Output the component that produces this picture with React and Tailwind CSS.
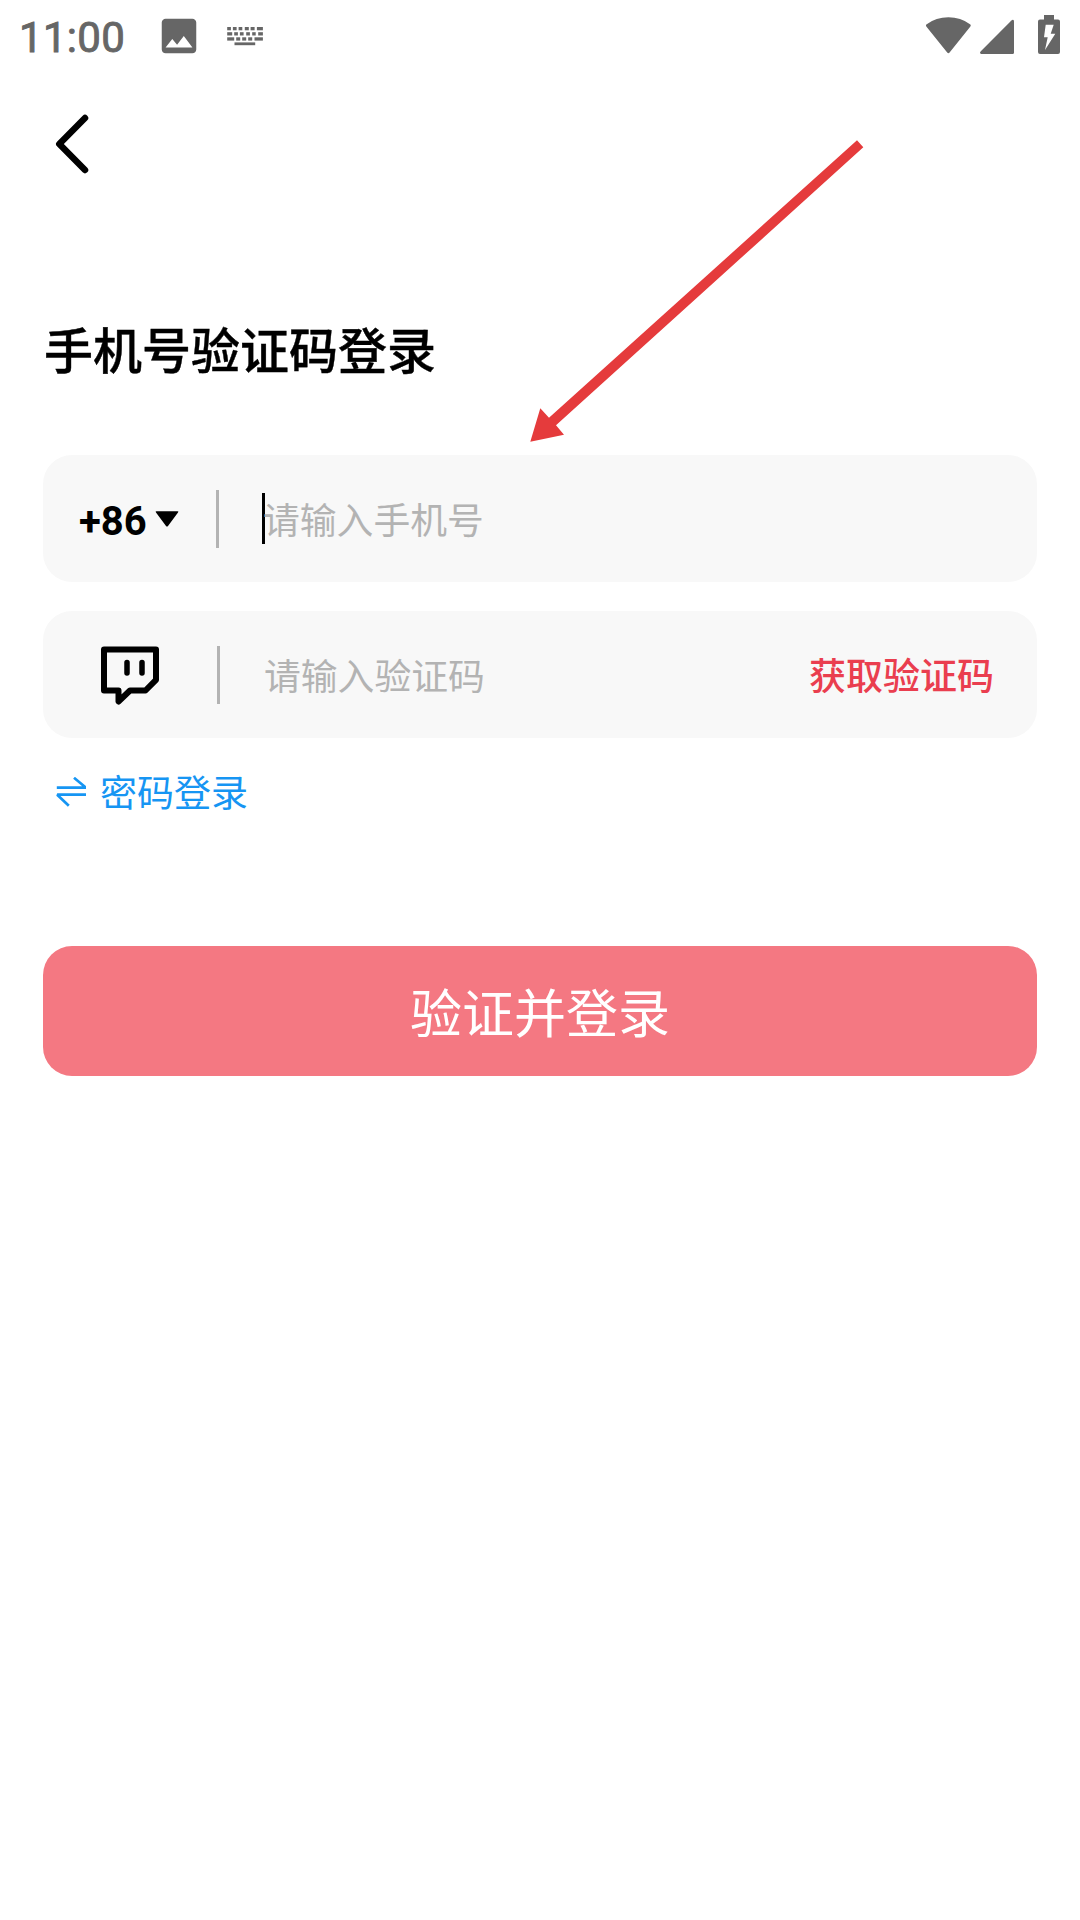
// Key caps of the keyboard status icon: x, y, width
const KEYS = [
  [0, 0, 3.7], [5.7, 0, 3.7], [11.4, 0, 3.7], [17.6, 0, 4], [23.4, 0, 4], [29.7, 0, 6],
  [0, 5.2, 5], [7, 5.2, 3.7], [12.7, 5.2, 3.7], [19, 5.2, 3.7], [25, 5.2, 3.5], [31, 5.2, 4.7],
  [0, 10.3, 7], [9, 10.3, 4], [15, 10.3, 4], [21, 10.3, 4], [27.3, 10.3, 8.4],
  [7.3, 15.4, 20.7],
];

function StatusBar() {
  return (
    <header className="flex h-[72px] items-start text-[#666]">
      <span className="ml-[19px] mt-[13px] w-[137px] font-['Roboto',sans-serif] text-[42px] font-normal leading-[50px] tracking-[0.3px] [-webkit-text-stroke:0.9px_#666]">
        11:00
      </span>
      <svg className="mt-[13px] h-[46px] w-[46px]" viewBox="0 0 24 24" fill="currentColor">
        <path d="M21 19V5c0-1.100-.900-2-2-2H5c-1.100 0-2 .900-2 2v14c0 1.100.900 2 2 2h14c1.100 0 2-.900 2-2zM8.500 13.500l2.500 3.010L14.500 12l4.500 6H5l3.500-4.500z" />
      </svg>
      <svg className="ml-[25px] mt-[27px] h-[19px] w-[36px]" viewBox="0 0 36 19" fill="currentColor">
        {KEYS.map(([x, y, w], i) => (
          <rect key={i} x={x + 0.2} y={y} width={w} height={i === 17 ? 2.8 : 3.3} />
        ))}
      </svg>
      <svg className="ml-auto mt-[16px] h-[38px] w-[46px]" viewBox="0 0 46 38" fill="currentColor">
        <path d="M1.500 10.700Q.300 9.200 1.700 8.200Q11 1.200 23.400 1.200T45 8.200Q46.400 9.200 45.200 10.700L24.600 36.500Q23.400 38 22.200 36.500Z" />
      </svg>
      <svg className="ml-[9px] mt-[19px] h-[35px] w-[34px]" viewBox="0 0 34 35" fill="currentColor">
        <path d="M1.300 35Q-.900 34.500.6 32.600L31.400 1.400Q33.600 0 34 2.300V33.500Q34 35 32.500 35Z" />
      </svg>
      <svg className="ml-[24px] mr-[20px] mt-[15px] h-[39px] w-[22px]" viewBox="0 0 22 39" fill="currentColor">
        <path fillRule="evenodd" d="M6 0H16V4.600H20Q22 4.600 22 6.600V37Q22 39 20 39H2Q0 39 0 37V6.600Q0 4.600 2 4.600H6ZM7.700 9.700L6 22.300H9.700L7 35L17.300 18.700H12.700L15.700 9.700Z" />
      </svg>
    </header>
  );
}

function Divider() {
  return <div className="mt-px h-[58px] w-[3px] bg-[#b3b3b3]" />;
}

export default function App() {
  return (
    <main className="relative h-[1920px] w-[1080px] overflow-hidden bg-white font-['Noto_Sans_CJK_SC',sans-serif] text-black">
      <StatusBar />

      <nav className="flex h-[144px] items-center pl-[54px]">
        <svg className="h-[60px] w-[36px]" viewBox="0 0 36 60" fill="none" stroke="currentColor" strokeWidth="6.500" strokeLinecap="round" strokeLinejoin="round">
          <path d="M31 4L5.300 30L31 56" />
        </svg>
      </nav>

      <section className="px-[43px]">
        <h1 className="mt-[96px] h-[72px] pl-px text-[49px] font-medium leading-[72px] [-webkit-text-stroke:0.4px_#000]">手机号验证码登录</h1>

        <div className="mt-[71px] flex h-[127px] items-center rounded-[29px] bg-[#f8f8f8]">
          <button className="flex w-[173px] items-center pl-[36px]">
            <span className="w-[68px] translate-y-[3px] text-left font-['Roboto',sans-serif] text-[40px] font-bold leading-[56px]">+86</span>
            <svg className="ml-[8px] h-[16px] w-[24px]" viewBox="0 0 24 16" fill="currentColor">
              <path d="M1.500 .3H22.500Q24 .3 23 1.600L13 14.900Q12 16 11 14.900L1 1.600Q0 .3 1.500 .3Z" />
            </svg>
          </button>
          <Divider />
          <div className="ml-[43px] h-[51px] w-[3px] bg-black" />
          <span className="-ml-[2px] -translate-y-px text-[36.8px] leading-[56px] text-[#b3b3b3]">请输入手机号</span>
        </div>

        <div className="mt-[29px] flex h-[127px] items-center rounded-[29px] bg-[#f8f8f8]">
          <div className="flex w-[174px] items-center pl-[58px]">
            <svg className="h-[60px] w-[60px]" viewBox="0 0 60 60" fill="none" stroke="currentColor" strokeWidth="6" strokeLinecap="round" strokeLinejoin="round">
              <path d="M3 4.500H55V34.800L44.500 45.500H29L17.500 56.500V45.500H3Z" />
              <path d="M26 17.500V28.100M41 17.500V28.100" strokeWidth="5.500" />
            </svg>
          </div>
          <Divider />
          <span className="ml-[44px] -translate-y-px text-[36.8px] leading-[56px] text-[#b3b3b3]">请输入验证码</span>
          <button className="ml-auto mr-[43px] -translate-y-px text-[37px] font-medium leading-[56px] text-[#ea3e4f]">获取验证码</button>
        </div>

        <button className="mt-[26px] flex h-[56px] items-center pl-[13px] text-[37px] leading-[56px] text-[#1695f3]">
          <svg className="mr-[14px] h-[30px] w-[30px]" viewBox="0 0 30 30" fill="none" stroke="currentColor" strokeWidth="2.700" strokeLinejoin="bevel">
            <path d="M.8 10.700H30L18 .8M30 17.700H1.200L12.800 28.800" />
          </svg>
          <span className="-translate-y-px">密码登录</span>
        </button>

        <button className="mt-[126px] h-[130px] w-full rounded-[29px] bg-[#f47882] text-[52px] leading-[130px] text-white">
          验证并登录
        </button>
      </section>

      <svg className="absolute left-[530px] top-[140px] h-[302px] w-[334px]" viewBox="530 140 334 302" fill="#e53b3c">
        <path d="M857 140.300L863.300 147.300L556 425.300L564 434.700L530.300 441.700L540.300 408.300L549 417.700Z" />
      </svg>
    </main>
  );
}
